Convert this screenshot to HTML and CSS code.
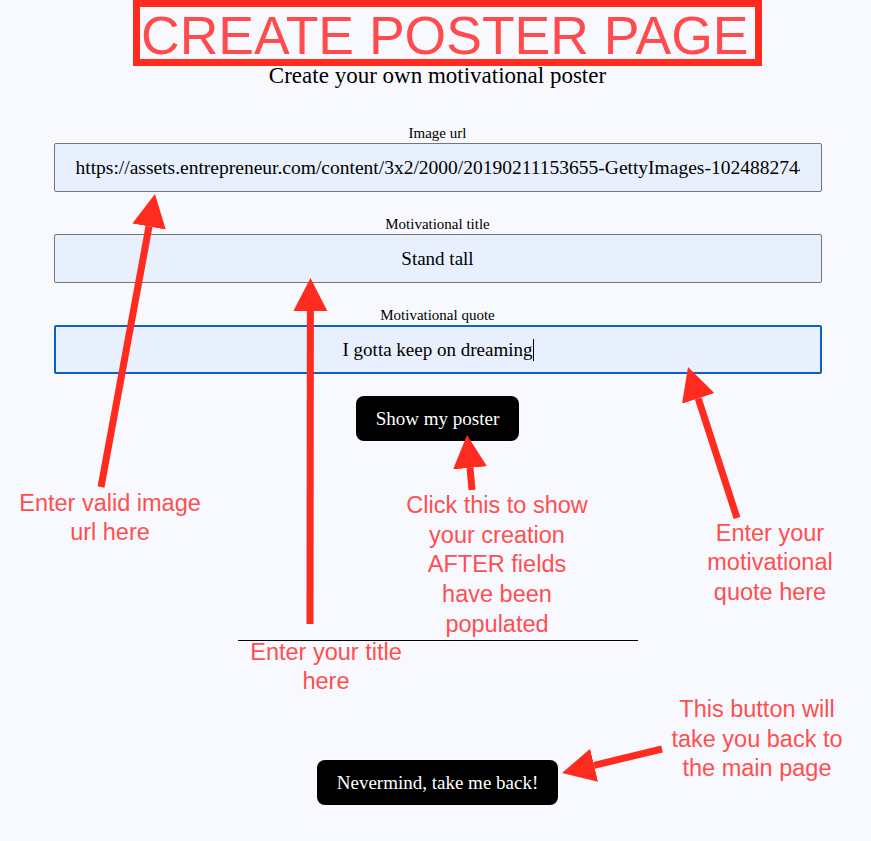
FILE: index.html
```html
<!DOCTYPE html>
<html lang="en">
<head>
<meta charset="utf-8">
<title>Create Poster Page</title>
<link rel="stylesheet" href="styles.css">
</head>
<body>
<main class="page">
  <h1 class="title">CREATE POSTER PAGE</h1>
  <p class="subtitle">Create your own motivational poster</p>
  <form class="form">
    <div class="field first">
      <label class="label" for="url">Image url</label>
      <input class="input url" id="url" type="text" value="https://assets.entrepreneur.com/content/3x2/2000/20190211153655-GettyImages-1024882744.jpeg">
    </div>
    <div class="field">
      <label class="label" for="title">Motivational title</label>
      <input class="input" id="title" type="text" value="Stand tall">
    </div>
    <div class="field">
      <label class="label" for="quote">Motivational quote</label>
      <div class="input-wrap">
        <input class="input focused" id="quote" type="text" value="I gotta keep on dreaming">
        <span class="caret"></span>
      </div>
    </div>
    <button class="btn show" type="button">Show my poster</button>
  </form>
  <div class="poster"></div>
  <button class="btn back" type="button">Nevermind, take me back!</button>
</main>

<svg class="annotations" width="871" height="841" viewBox="0 0 871 841" xmlns="http://www.w3.org/2000/svg">
  <defs>
    <marker id="head" markerUnits="userSpaceOnUse" viewBox="0 0 33 34" markerWidth="33" markerHeight="34" refX="0" refY="17" orient="auto">
      <path d="M0,0 L33,17 L0,34 Z" fill="#ff2b1f"/>
    </marker>
  </defs>
  <g class="arrows">
    <line x1="101" y1="487" x2="149" y2="226.5" marker-end="url(#head)"/>
    <line x1="310" y1="624" x2="310.4" y2="311" marker-end="url(#head)"/>
    <line x1="472" y1="490" x2="470" y2="467.9" marker-end="url(#head)"/>
    <line x1="737" y1="518" x2="698.2" y2="398.4" marker-end="url(#head)"/>
    <line x1="662" y1="749" x2="594.1" y2="765.3" marker-end="url(#head)"/>
  </g>
  <g class="notes">
    <text x="110" y="511">Enter valid image</text>
    <text x="110" y="540">url here</text>

    <text x="326" y="660">Enter your title</text>
    <text x="326" y="689">here</text>

    <text x="497" y="513">Click this to show</text>
    <text x="497" y="543">your creation</text>
    <text x="497" y="572">AFTER fields</text>
    <text x="497" y="602">have been</text>
    <text x="497" y="632">populated</text>

    <text x="770" y="541">Enter your</text>
    <text x="770" y="570">motivational</text>
    <text x="770" y="600">quote here</text>

    <text x="757" y="717">This button will</text>
    <text x="757" y="747">take you back to</text>
    <text x="757" y="776">the main page</text>
  </g>
</svg>
</body>
</html>
```

FILE: styles.css
```css
html {
  background: #f8f9ff;
}

body {
  margin: 0;
  padding: 0 0 0 4px;
  font-family: "Liberation Serif", "Times New Roman", serif;
  color: #000;
  background: #f8f9ff;
}

.page {
  display: flex;
  flex-direction: column;
  align-items: center;
  min-height: 841px;
}

.title {
  align-self: flex-start;
  margin: 0 0 0 129px;
  padding: 5px 7px 0 1px;
  height: 47px;
  border: 7px solid #ff2b1f;
  font-family: "Liberation Sans", Arial, sans-serif;
  font-weight: 400;
  font-size: 53.5px;
  line-height: 47px;
  color: #ff4b4b;
  white-space: nowrap;
}

.subtitle {
  margin: 0;
  font-size: 23px;
  line-height: 20px;
  text-align: center;
}

.form {
  display: flex;
  flex-direction: column;
  align-items: center;
  width: 768px;
}

.field {
  width: 100%;
  margin-top: 23px;
}

.field.first {
  margin-top: 38px;
}

.label {
  display: block;
  margin-bottom: 1px;
  font-size: 15px;
  line-height: 18px;
  text-align: center;
}

.input-wrap {
  position: relative;
}

.input {
  display: block;
  box-sizing: border-box;
  width: 100%;
  height: 49px;
  margin: 0;
  padding: 0 21px;
  border: 1px solid #767676;
  border-radius: 2px;
  background: #e8f0fe;
  font-family: "Liberation Serif", "Times New Roman", serif;
  font-size: 19px;
  color: #000;
  text-align: center;
  outline: none;
}

.input.url {
  font-size: 19.5px;
}

.input.focused {
  border: 2px solid #0f5fcb;
  padding: 0 20px;
}

.caret {
  position: absolute;
  left: calc(50% + 95px);
  top: 14px;
  width: 1px;
  height: 22px;
  background: #000;
}

.btn {
  box-sizing: border-box;
  height: 45px;
  padding: 0 19.5px;
  border: none;
  border-radius: 8px;
  background: #000;
  color: #fff;
  font-family: "Liberation Serif", "Times New Roman", serif;
  font-size: 19px;
  line-height: 45px;
  white-space: nowrap;
}

.show {
  margin-top: 21.5px;
}

.poster {
  width: 400px;
  height: 0;
  margin-top: 199.5px;
  border-bottom: 1px solid #000;
}

.back {
  margin-top: 119px;
}

.annotations {
  position: absolute;
  top: 0;
  left: 0;
  pointer-events: none;
}

.arrows line {
  stroke: #ff2b1f;
  stroke-width: 7;
  stroke-linecap: butt;
}

.notes text {
  font-family: "Liberation Sans", Arial, sans-serif;
  font-size: 23.5px;
  fill: #ff4f4f;
  text-anchor: middle;
}
```
